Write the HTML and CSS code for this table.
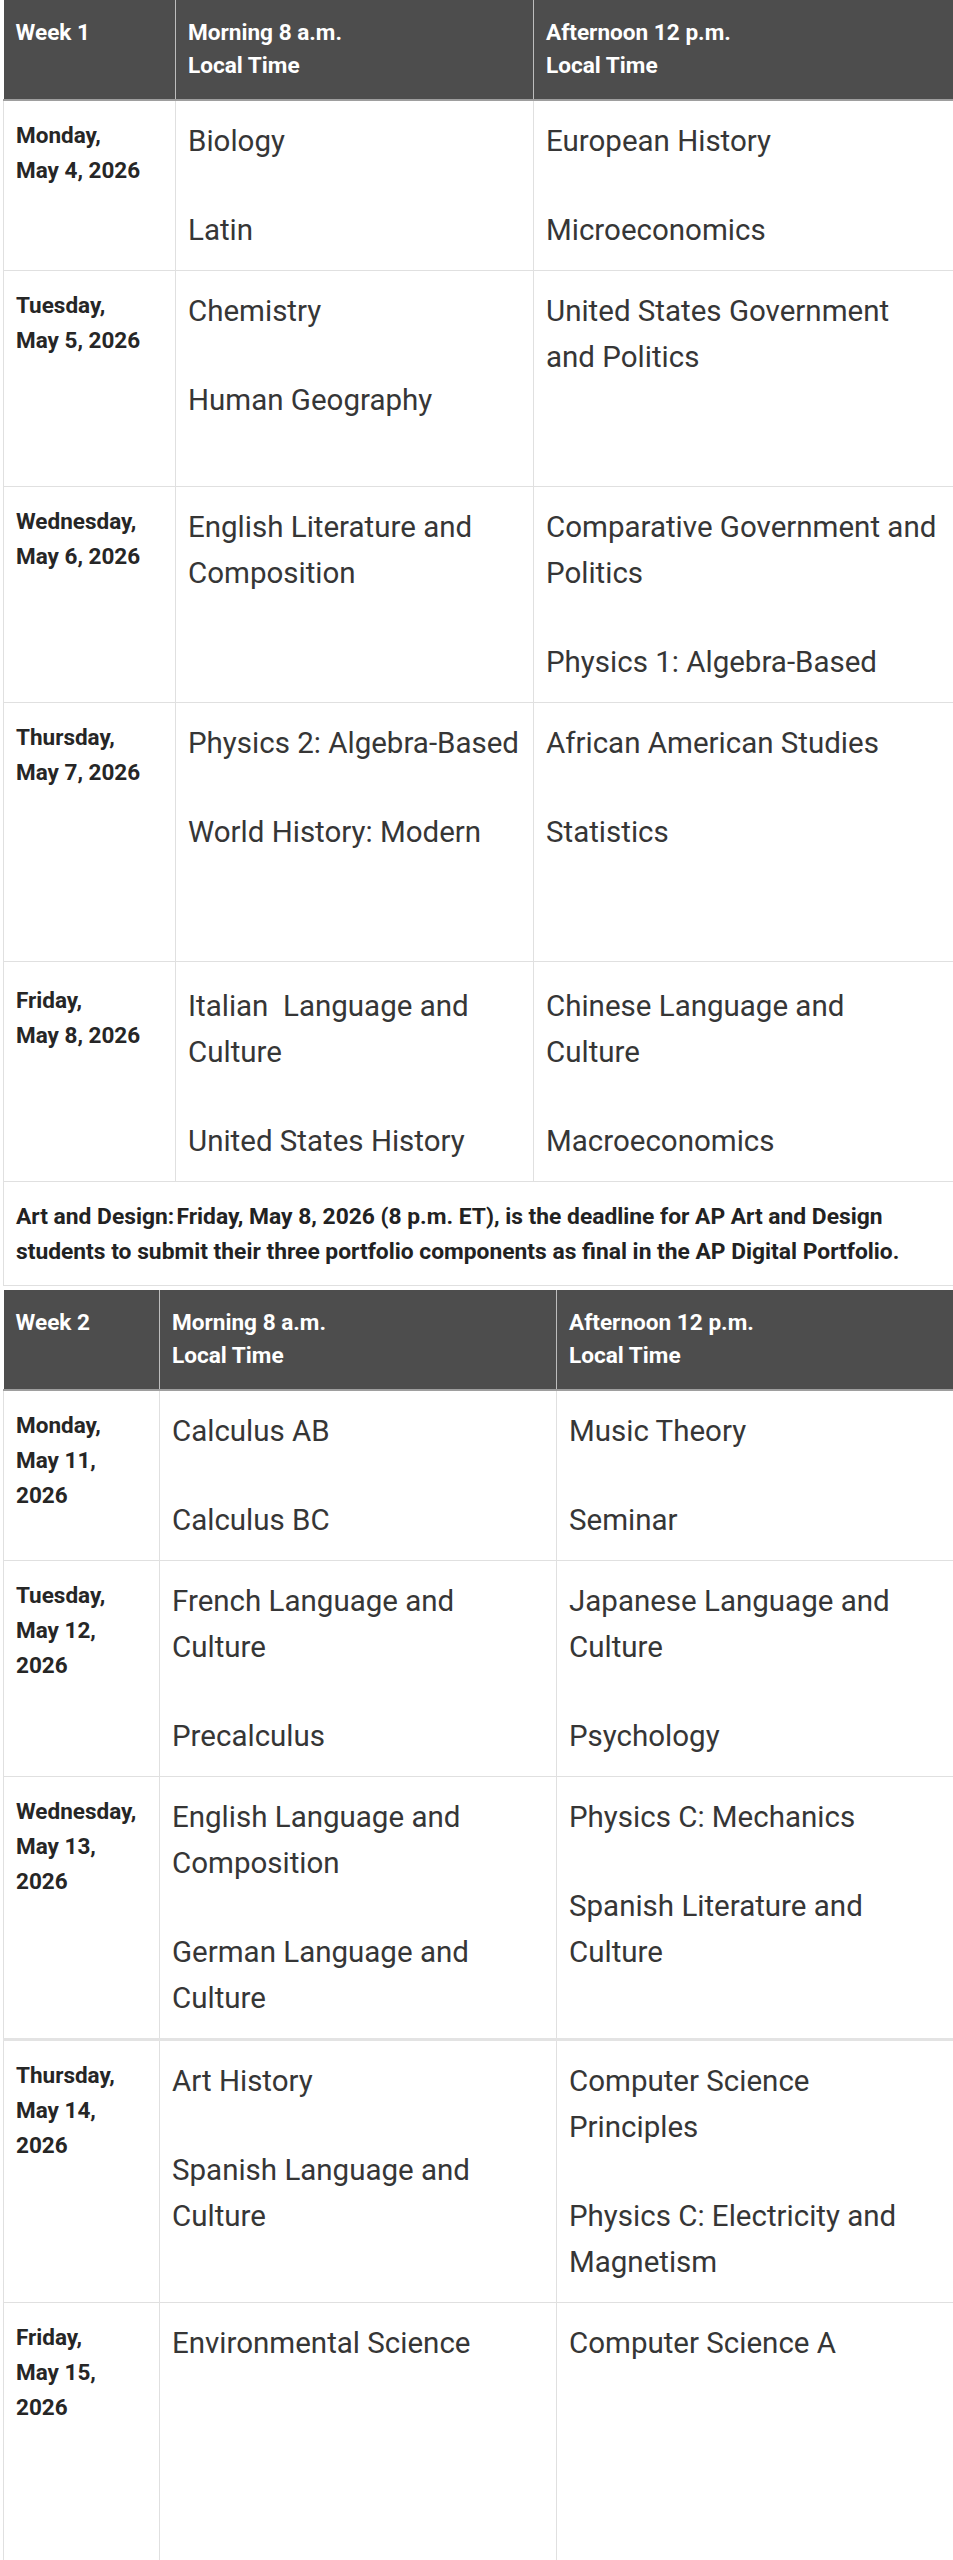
FILE: index.html
```html
<!DOCTYPE html>
<html lang="en">
<head>
<meta charset="utf-8">
<title>AP Exam Schedule 2026</title>
<link rel="stylesheet" href="styles.css">
</head>
<body>
<div class="page">
  <table class="sched week1">
    <colgroup><col class="c-day"><col class="c-am"><col class="c-pm"></colgroup>
    <thead>
      <tr><th>Week 1</th><th>Morning 8 a.m.<br>Local Time</th><th>Afternoon 12 p.m.<br>Local Time</th></tr>
    </thead>
    <tbody>
      <tr>
        <td class="day">Monday,<br>May 4, 2026</td>
        <td><p>Biology</p><p>Latin</p></td>
        <td><p>European History</p><p>Microeconomics</p></td>
      </tr>
      <tr>
        <td class="day">Tuesday,<br>May 5, 2026</td>
        <td><p>Chemistry</p><p>Human Geography</p></td>
        <td><p>United States Government<br>and Politics</p><p>&nbsp;</p></td>
      </tr>
      <tr>
        <td class="day">Wednesday,<br>May 6, 2026</td>
        <td><p>English Literature and<br>Composition</p></td>
        <td><p>Comparative Government and<br>Politics</p><p>Physics 1: Algebra-Based</p></td>
      </tr>
      <tr>
        <td class="day">Thursday,<br>May 7, 2026</td>
        <td><p>Physics 2: Algebra-Based</p><p>World History: Modern</p><p>&nbsp;</p></td>
        <td><p>African American Studies</p><p>Statistics</p></td>
      </tr>
      <tr class="fri">
        <td class="day">Friday,<br>May 8, 2026</td>
        <td><p>Italian&nbsp; Language and<br>Culture</p><p>United States History</p></td>
        <td><p>Chinese Language and<br>Culture</p><p>Macroeconomics</p></td>
      </tr>
      <tr class="note-row">
        <td colspan="3" class="note">Art and Design:&#8202;Friday, May 8, 2026 (8 p.m. ET), is the deadline for AP Art and Design<br>students to submit their three portfolio components as final in the AP Digital Portfolio.</td>
      </tr>
    </tbody>
  </table>

  <table class="sched week2">
    <colgroup><col class="c-day"><col class="c-am"><col class="c-pm"></colgroup>
    <thead>
      <tr><th>Week 2</th><th>Morning 8 a.m.<br>Local Time</th><th>Afternoon 12 p.m.<br>Local Time</th></tr>
    </thead>
    <tbody>
      <tr>
        <td class="day">Monday,<br>May 11,<br>2026</td>
        <td><p>Calculus AB</p><p>Calculus BC</p></td>
        <td><p>Music Theory</p><p>Seminar</p></td>
      </tr>
      <tr>
        <td class="day">Tuesday,<br>May 12,<br>2026</td>
        <td><p>French Language and<br>Culture</p><p>Precalculus</p></td>
        <td><p>Japanese Language and<br>Culture</p><p>Psychology</p></td>
      </tr>
      <tr>
        <td class="day">Wednesday,<br>May 13,<br>2026</td>
        <td><p>English Language and<br>Composition</p><p>German Language and<br>Culture</p></td>
        <td><p>Physics C: Mechanics</p><p>Spanish Literature and<br>Culture</p></td>
      </tr>
      <tr class="thick-top">
        <td class="day">Thursday,<br>May 14,<br>2026</td>
        <td><p>Art History</p><p>Spanish Language and<br>Culture</p></td>
        <td><p>Computer Science<br>Principles</p><p>Physics C: Electricity and<br>Magnetism</p></td>
      </tr>
      <tr>
        <td class="day">Friday,<br>May 15,<br>2026</td>
        <td><p>Environmental Science</p><p>&nbsp;</p><p>&nbsp;</p></td>
        <td><p>Computer Science A</p></td>
      </tr>
    </tbody>
  </table>
</div>
</body>
</html>
```

FILE: styles.css
```css
html, body {
  margin: 0;
  padding: 0;
  background: #ffffff;
}

body {
  font-family: Roboto, "Liberation Sans", Arial, sans-serif;
  color: #333333;
}

.page {
  padding-left: 3px;
}

.sched {
  width: 950px;
  border-collapse: collapse;
  table-layout: fixed;
}

.week1 .c-day { width: 172px; }
.week1 .c-am { width: 358px; }
.week1 .c-pm { width: 420px; }

.week2 { margin-top: 4px; }
.week2 .c-day { width: 156px; }
.week2 .c-am { width: 397px; }
.week2 .c-pm { width: 397px; }

.sched th {
  background: #4d4d4d;
  color: #ffffff;
  font-weight: 700;
  font-size: 22.6px;
  line-height: 33px;
  text-align: left;
  vertical-align: top;
  padding: 16px 2px 17px 12px;
  border-left: 1px solid #bdbdbd;
  border-bottom: 2px solid #9e9e9e;
}

.sched th:first-child { border-left: none; }

.sched td {
  vertical-align: top;
  padding: 17px 2px 17px 12px;
  border: 1px solid #e0e0e0;
  font-size: 29.5px;
  line-height: 46px;
  color: #363636;
}

.sched td p {
  margin: 0 0 43px 0;
}

.sched td p:last-child {
  margin-bottom: 0;
}

.sched td.day {
  font-size: 22.5px;
  line-height: 35px;
  font-weight: 700;
  color: #262626;
}

.sched tr.fri td {
  padding-top: 21px;
}

.sched td.note {
  font-size: 22.8px;
  line-height: 35px;
  font-weight: 700;
  color: #222222;
  padding: 17px 2px 16px 12px;
}

.sched tr.thick-top td {
  border-top: 3px solid #e3e3e3;
}
```
